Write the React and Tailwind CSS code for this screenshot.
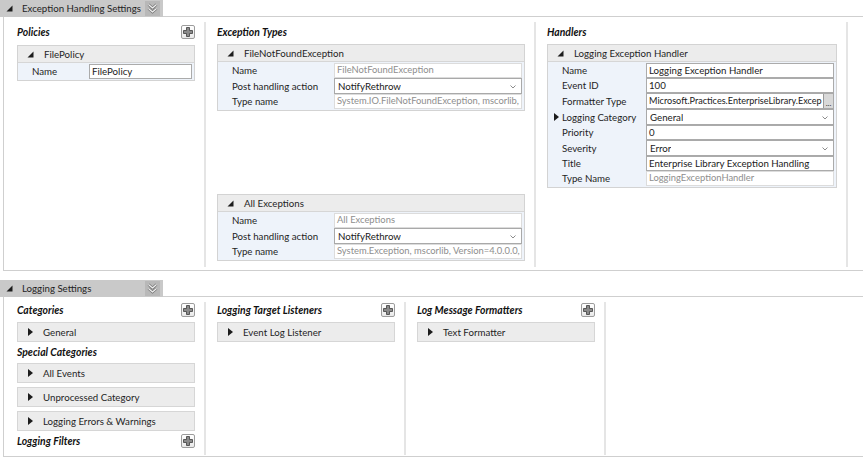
import React from "react";

const font = "font-['Lato','Liberation_Sans',sans-serif]";

function ExpandedTri() {
  return (
    <svg width="7" height="7" viewBox="0 0 7 7" className="shrink-0">
      <polygon points="6.5,0.5 6.5,6.5 0.5,6.5" fill="#1c1c1c" />
    </svg>
  );
}

function CollapsedTri() {
  return (
    <svg width="5" height="8" viewBox="0 0 5 8" className="shrink-0">
      <polygon points="0,0 5,4 0,8" fill="#1c1c1c" />
    </svg>
  );
}

function PlusButton() {
  return (
    <div className="flex h-[14px] w-[14px] items-center justify-center rounded-[2px] border border-[#9c9c9c] bg-gradient-to-b from-white to-[#e9e9e9]">
      <svg width="10" height="10" viewBox="0 0 10 10">
        <path d="M3.5 0.5h3v3h3v3h-3v3h-3v-3h-3v-3h3z" fill="#8a8a8a" stroke="#3c3c3c" strokeWidth="0.8" />
      </svg>
    </div>
  );
}

function CollapseIcon() {
  return (
    <div className="flex h-[15px] w-[15px] shrink-0 items-center justify-center bg-[#b8b8b8]">
      <svg width="11" height="11" viewBox="0 0 11 11">
        <path d="M1.5 1.5l4 3.5l4-3.5M1.5 5.5l4 3.5l4-3.5" fill="none" stroke="#777" strokeWidth="2.6" />
        <path d="M1.5 1.5l4 3.5l4-3.5M1.5 5.5l4 3.5l4-3.5" fill="none" stroke="#f2f2f2" strokeWidth="1.1" />
      </svg>
    </div>
  );
}

function Tab({ title }) {
  return (
    <div className="flex h-[17px] items-stretch">
      <div className="flex w-[163px] items-center bg-[#c9c9c9] pl-[6px] pr-[3px]">
        <ExpandedTri />
        <span className="ml-[9px] flex-1 whitespace-nowrap text-[9.7px] text-[#1e1e1e]">{title}</span>
        <CollapseIcon />
      </div>
      <div className="flex-1 border-b border-[#cfcfcf]" />
    </div>
  );
}

function SectionTitle({ title, plus }) {
  return (
    <div className="flex h-[16px] items-center justify-between">
      <span className="pt-[1px] text-[10.4px] font-bold italic text-[#111]">{title}</span>
      {plus && <PlusButton />}
    </div>
  );
}

function Chevron() {
  return (
    <svg width="6" height="4" viewBox="0 0 6 4" className="shrink-0">
      <path d="M0.5 0.5l2.5 2.5l2.5-2.5" fill="none" stroke="#8c8c8c" strokeWidth="1" />
    </svg>
  );
}

function Value({ v }) {
  if (v.type === "select") {
    return (
      <div className="flex h-[16px] items-center justify-between border border-[#a9a9a9] bg-white pl-[3px] pr-[5px] pt-[1px]">
        <span className="truncate text-[#1a1a1a]">{v.text}</span>
        <Chevron />
      </div>
    );
  }
  if (v.type === "readonly") {
    return (
      <div className="flex h-[15px] items-center overflow-hidden whitespace-nowrap border border-[#dcdcdc] bg-white pl-[2px] text-[9.4px] text-[#8e8e8e]">
        {v.text}
      </div>
    );
  }
  if (v.type === "button") {
    return (
      <div className="flex h-[16px] items-center border border-[#a9a9a9] bg-white pl-[2px]">
        <span className="min-w-0 flex-1 overflow-hidden whitespace-nowrap text-[9.1px] text-[#1a1a1a]">{v.text}</span>
        <span className="flex h-[14px] w-[10px] shrink-0 items-end justify-center border-l border-[#9a9a9a] bg-[#d9d9d9] text-[8px] leading-[10px] text-[#333]">...</span>
      </div>
    );
  }
  return (
    <div className="flex h-[15px] items-center overflow-hidden whitespace-nowrap border border-[#ababab] bg-white pl-[2px] text-[#1a1a1a]">
      {v.text}
    </div>
  );
}

function Group({ title, rows, labelW, className = "" }) {
  return (
    <div className={"border border-[#d3d3d3] " + className}>
      <div className="flex h-[17px] items-center border-b border-[#d6d6d6] bg-[#ececec] pl-[9px]">
        <ExpandedTri />
        <span className="ml-[10px] text-[9.7px] text-[#1e1e1e]">{title}</span>
      </div>
      <div className="flex flex-col bg-[#eef3fa] py-[1px] pr-[2px]">
        {rows.map((r) => (
          <div key={r.label} className="flex items-center text-[9.7px]">
            <div className="flex shrink-0 items-center text-[#1e1e1e]" style={{ width: labelW }}>
              <span className="flex w-[14px] justify-center pl-[2px]">{r.arrow && <CollapsedTri />}</span>
              <span>{r.label}</span>
            </div>
            <div className="min-w-0 flex-1">
              <Value v={r} />
            </div>
          </div>
        ))}
      </div>
    </div>
  );
}

function Item({ title }) {
  return (
    <div className="flex h-[20px] items-center border border-[#d6d6d6] bg-[#ececec] pl-[10px]">
      <CollapsedTri />
      <span className="ml-[10px] text-[9.7px] text-[#1e1e1e]">{title}</span>
    </div>
  );
}

function Column({ width, first, children, last }) {
  return (
    <div
      className={
        "flex shrink-0 flex-col pr-[9px] " +
        (first ? "pl-[13px] " : "pl-[11px] ") +
        (last ? "" : "border-r-2 border-[#e5e5e5]")
      }
    >
      <div className="flex flex-col" style={{ width }}>
        {children}
      </div>
    </div>
  );
}

export default function App() {
  const handlerRows = [
    { label: "Name", text: "Logging Exception Handler" },
    { label: "Event ID", text: "100" },
    { label: "Formatter Type", type: "button", text: "Microsoft.Practices.EnterpriseLibrary.Excep" },
    { label: "Logging Category", type: "select", text: "General", arrow: true },
    { label: "Priority", text: "0" },
    { label: "Severity", type: "select", text: "Error" },
    { label: "Title", text: "Enterprise Library Exception Handling" },
    { label: "Type Name", type: "readonly", text: "LoggingExceptionHandler" },
  ];

  return (
    <div className={"h-[459px] w-[863px] overflow-hidden bg-white " + font}>
      <Tab title="Exception Handling Settings" />
      <div className="ml-[3px] flex h-[254px] border-b border-l border-[#cfcfcf] pb-[3px] pt-[5px]">
        <Column width={178} first>
          <div className="pt-[2px]" />
          <SectionTitle title="Policies" plus />
          <Group
            className="mt-[5px]"
            title="FilePolicy"
            labelW={71}
            rows={[{ label: "Name", text: "FilePolicy" }]}
          />
        </Column>
        <Column width={308}>
          <div className="pt-[2px]" />
          <SectionTitle title="Exception Types" />
          <Group
            className="mt-[4px]"
            title="FileNotFoundException"
            labelW={116}
            rows={[
              { label: "Name", type: "readonly", text: "FileNotFoundException" },
              { label: "Post handling action", type: "select", text: "NotifyRethrow" },
              { label: "Type name", type: "readonly", text: "System.IO.FileNotFoundException, mscorlib," },
            ]}
          />
          <Group
            className="mt-[83px]"
            title="All Exceptions"
            labelW={116}
            rows={[
              { label: "Name", type: "readonly", text: "All Exceptions" },
              { label: "Post handling action", type: "select", text: "NotifyRethrow" },
              { label: "Type name", type: "readonly", text: "System.Exception, mscorlib, Version=4.0.0.0," },
            ]}
          />
        </Column>
        <Column width={290}>
          <div className="pt-[2px]" />
          <SectionTitle title="Handlers" />
          <Group className="mt-[4px]" title="Logging Exception Handler" labelW={98} rows={handlerRows} />
        </Column>
      </div>

      <div className="h-[9px]" />
      <Tab title="Logging Settings" />
      <div className="ml-[3px] flex h-[160px] border-b border-l border-[#cfcfcf] pb-[1px] pt-[5px]">
        <Column width={178} first>
          <SectionTitle title="Categories" plus />
          <div className="mt-[4px]">
            <Item title="General" />
          </div>
          <div className="mt-[2px]">
            <SectionTitle title="Special Categories" />
          </div>
          <div className="mt-[3px] flex flex-col gap-[4px]">
            <Item title="All Events" />
            <Item title="Unprocessed Category" />
            <Item title="Logging Errors & Warnings" />
          </div>
          <div className="mt-[2px]">
            <SectionTitle title="Logging Filters" plus />
          </div>
        </Column>
        <Column width={178}>
          <SectionTitle title="Logging Target Listeners" plus />
          <div className="mt-[4px]">
            <Item title="Event Log Listener" />
          </div>
        </Column>
        <Column width={178}>
          <SectionTitle title="Log Message Formatters" plus />
          <div className="mt-[4px]">
            <Item title="Text Formatter" />
          </div>
        </Column>
      </div>
    </div>
  );
}
